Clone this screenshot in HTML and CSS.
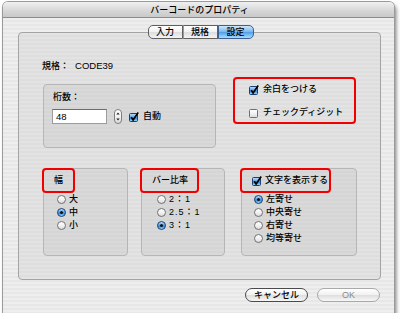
FILE: index.html
```html
<!DOCTYPE html>
<html lang="ja">
<head>
<meta charset="utf-8">
<title>バーコードのプロパティ</title>
<link rel="stylesheet" href="styles.css">
</head>
<body>

<svg class="defs" width="0" height="0">
  <defs>
    <linearGradient id="aqua" x1="0" y1="0" x2="0" y2="1">
      <stop offset="0" stop-color="#c8e4fb"/>
      <stop offset="0.45" stop-color="#5aa6ec"/>
      <stop offset="0.55" stop-color="#2f84dc"/>
      <stop offset="1" stop-color="#9fdcff"/>
    </linearGradient>
    <linearGradient id="plain" x1="0" y1="0" x2="0" y2="1">
      <stop offset="0" stop-color="#ffffff"/>
      <stop offset="0.5" stop-color="#f2f2f2"/>
      <stop offset="1" stop-color="#d9d9d9"/>
    </linearGradient>
  </defs>
</svg>

<div class="window">
  <div class="titlebar">バーコードのプロパティ</div>
  <div class="content">
    <div class="tabs">
      <span class="tab">入力</span><span class="tab">規格</span><span class="tab tab-on">設定</span>
    </div>

    <div class="pane">
      <div class="spec">規格：<span class="spec-val">CODE39</span></div>

      <div class="row-top">
        <div class="group digits">
          <div class="digits-label">桁数：</div>
          <div class="digits-row">
            <span class="field">48</span>
            <svg class="stepper" width="8" height="15" viewBox="0 0 8 15">
              <rect x="0.5" y="0.5" width="7" height="14" rx="3.5" fill="url(#plain)" stroke="#7d7d7d"/>
              <path d="M2.3 5.6 L4 3.6 L5.7 5.6 Z M2.3 9.4 L4 11.4 L5.7 9.4 Z" fill="#222"/>
            </svg>
            <svg class="check" width="10" height="10" viewBox="0 0 10 10">
              <rect x="0.5" y="1.5" width="8" height="8" rx="1" fill="url(#aqua)" stroke="#1d3f73"/>
              <path d="M2.2 5.2 L4.1 7.9 L9.2 0.6" fill="none" stroke="#000" stroke-width="1.7"/>
            </svg>
            <span class="opt-text">自動</span>
          </div>
        </div>

        <div class="mark margin-box">
          <div class="opt">
            <svg class="check" width="10" height="10" viewBox="0 0 10 10">
              <rect x="0.5" y="1.5" width="8" height="8" rx="1" fill="url(#aqua)" stroke="#1d3f73"/>
              <path d="M2.2 5.2 L4.1 7.9 L9.2 0.6" fill="none" stroke="#000" stroke-width="1.7"/>
            </svg>
            <span class="opt-text">余白をつける</span>
          </div>
          <div class="opt opt-second">
            <svg class="check" width="10" height="10" viewBox="0 0 10 10">
              <rect x="0.5" y="1.5" width="8" height="8" rx="1" fill="url(#plain)" stroke="#6f6f6f"/>
            </svg>
            <span class="opt-text">チェックディジット</span>
          </div>
        </div>
      </div>

      <div class="row-bottom">
        <div class="group box-width">
          <div class="mark title title-width">幅</div>
          <div class="radios">
            <div class="radio-row"><svg class="radio" width="9" height="9" viewBox="0 0 9 9"><circle cx="4.5" cy="4.5" r="4" fill="url(#plain)" stroke="#6f6f6f"/></svg><span class="opt-text">大</span></div>
            <div class="radio-row"><svg class="radio" width="9" height="9" viewBox="0 0 9 9"><circle cx="4.5" cy="4.5" r="4" fill="url(#aqua)" stroke="#1d3f73"/><circle cx="4.5" cy="4.5" r="1.5" fill="#111"/></svg><span class="opt-text">中</span></div>
            <div class="radio-row"><svg class="radio" width="9" height="9" viewBox="0 0 9 9"><circle cx="4.5" cy="4.5" r="4" fill="url(#plain)" stroke="#6f6f6f"/></svg><span class="opt-text">小</span></div>
          </div>
        </div>

        <div class="group box-ratio">
          <div class="mark title title-ratio">バー比率</div>
          <div class="radios radios-ratio">
            <div class="radio-row"><svg class="radio" width="9" height="9" viewBox="0 0 9 9"><circle cx="4.5" cy="4.5" r="4" fill="url(#plain)" stroke="#6f6f6f"/></svg><span class="opt-text num">2：1</span></div>
            <div class="radio-row"><svg class="radio" width="9" height="9" viewBox="0 0 9 9"><circle cx="4.5" cy="4.5" r="4" fill="url(#plain)" stroke="#6f6f6f"/></svg><span class="opt-text num">2.5：1</span></div>
            <div class="radio-row"><svg class="radio" width="9" height="9" viewBox="0 0 9 9"><circle cx="4.5" cy="4.5" r="4" fill="url(#aqua)" stroke="#1d3f73"/><circle cx="4.5" cy="4.5" r="1.5" fill="#111"/></svg><span class="opt-text num">3：1</span></div>
          </div>
        </div>

        <div class="group box-text">
          <div class="mark title title-text">
            <svg class="check" width="10" height="10" viewBox="0 0 10 10">
              <rect x="0.5" y="1.5" width="8" height="8" rx="1" fill="url(#aqua)" stroke="#1d3f73"/>
              <path d="M2.2 5.2 L4.1 7.9 L9.2 0.6" fill="none" stroke="#000" stroke-width="1.7"/>
            </svg>
            <span class="opt-text">文字を表示する</span>
          </div>
          <div class="radios radios-text">
            <div class="radio-row"><svg class="radio" width="9" height="9" viewBox="0 0 9 9"><circle cx="4.5" cy="4.5" r="4" fill="url(#aqua)" stroke="#1d3f73"/><circle cx="4.5" cy="4.5" r="1.5" fill="#111"/></svg><span class="opt-text">左寄せ</span></div>
            <div class="radio-row"><svg class="radio" width="9" height="9" viewBox="0 0 9 9"><circle cx="4.5" cy="4.5" r="4" fill="url(#plain)" stroke="#6f6f6f"/></svg><span class="opt-text">中央寄せ</span></div>
            <div class="radio-row"><svg class="radio" width="9" height="9" viewBox="0 0 9 9"><circle cx="4.5" cy="4.5" r="4" fill="url(#plain)" stroke="#6f6f6f"/></svg><span class="opt-text">右寄せ</span></div>
            <div class="radio-row"><svg class="radio" width="9" height="9" viewBox="0 0 9 9"><circle cx="4.5" cy="4.5" r="4" fill="url(#plain)" stroke="#6f6f6f"/></svg><span class="opt-text">均等寄せ</span></div>
          </div>
        </div>
      </div>
    </div>

    <div class="buttons">
      <span class="btn btn-cancel">キャンセル</span>
      <span class="btn btn-ok">OK</span>
    </div>
  </div>
</div>

</body>
</html>
```

FILE: styles.css
```css
body {
  margin: 0;
  padding: 0;
  background: #fff;
  font-family: "Liberation Sans", "Noto Sans CJK JP", sans-serif;
  font-size: 9px;
  font-weight: 500;
  color: #000;
  white-space: nowrap;
}

.defs {
  position: absolute;
  width: 0;
  height: 0;
}

.window {
  margin: 2px 0 0 3px;
  width: 391px;
  height: 311px;
  border-radius: 5px 5px 0 0;
  overflow: hidden;
  background: repeating-linear-gradient(#eeeeee 0 2px, #e7e7e7 2px 4px);
  box-shadow: 0 0 0 1px #9a9a9a, 2px 3px 4px rgba(0, 0, 0, 0.55);
}

.titlebar {
  height: 15px;
  line-height: 16px;
  text-align: center;
  background: linear-gradient(#f0f0f0, #d6d6d6 60%, #c9c9c9);
  border-bottom: 1px solid #8c8c8c;
  padding-left: 2px;
}

.content {
  padding: 7px 13px 0 15px;
}

.tabs {
  display: flex;
  justify-content: center;
  position: relative;
  z-index: 1;
  padding-left: 2px;
}

.tab {
  width: 33px;
  height: 12px;
  line-height: 12px;
  text-align: center;
  background: linear-gradient(#ffffff, #f1f1f1 50%, #dcdcdc 51%, #f4f4f4);
  border: 1px solid #5f5f5f;
  border-left: 1px solid #9a9a9a;
}

.tab:first-child {
  border-left: 1px solid #5f5f5f;
  border-radius: 5px 0 0 5px;
}

.tab-on {
  width: 34px;
  border-radius: 0 5px 5px 0;
  border-color: #3d5f91;
  background: linear-gradient(#cfe7fb, #76b6ef 50%, #4f9ce6 51%, #a6defd);
}

.pane {
  margin-top: -7px;
  height: 248px;
  box-sizing: border-box;
  border: 1px solid #a4a4a4;
  border-radius: 4px;
  background: repeating-linear-gradient(#e3e3e3 0 2px, #dedede 2px 4px);
  padding: 26px 0 0 24px;
}

.spec {
  line-height: 13px;
  margin-left: -1px;
}

.spec-val {
  margin-left: 6px;
  font-size: 9.5px;
}

.row-top {
  display: flex;
  align-items: flex-start;
  margin-top: 4px;
}

.group {
  border: 1px solid #b6b6b6;
  border-radius: 4px;
  background: repeating-linear-gradient(#d9d9d9 0 2px, #d5d5d5 2px 4px);
  box-sizing: border-box;
}

.digits {
  margin-top: 7px;
  width: 173px;
  height: 64px;
  padding: 6px 0 0 9px;
}

.digits-label {
  line-height: 13px;
}

.digits-row {
  display: flex;
  align-items: center;
  margin-top: 5px;
  margin-left: -1px;
}

.field {
  width: 55px;
  height: 15px;
  box-sizing: border-box;
  background: #fff;
  border: 1px solid #9c9c9c;
  border-top-color: #6c6c6c;
  padding-left: 3px;
  line-height: 13px;
  font-size: 9.5px;
  font-weight: normal;
}

.stepper {
  margin-left: 7px;
}

.digits-row .check {
  margin-left: 7px;
}

.opt-text {
  margin-left: 4px;
  line-height: 13px;
}

.mark {
  border: 2px solid #f10000;
  border-radius: 4px;
  box-sizing: border-box;
}

.margin-box {
  margin-left: 17px;
  width: 123px;
  height: 47px;
  padding: 4px 0 0 14px;
}

.opt {
  display: flex;
  align-items: center;
  height: 13px;
}

.opt-second {
  margin-top: 10px;
}

.row-bottom {
  display: flex;
  margin-top: 20px;
}

.row-bottom .group {
  height: 88px;
}

.box-width {
  width: 85px;
}

.box-ratio {
  width: 84px;
  margin-left: 13px;
}

.box-text {
  width: 116px;
  margin-left: 16px;
}

.title {
  margin: -1px 0 0 -2px;
  height: 25px;
  line-height: 21px;
  padding-left: 10px;
  display: flex;
  align-items: center;
}

.title-width {
  width: 33px;
}

.title-ratio {
  width: 59px;
}

.title-text {
  width: 91px;
}

.title-text .opt-text {
  margin-left: 3px;
}

.radios {
  padding-left: 13px;
}

.radios-ratio {
  padding-left: 15px;
}

.radios-text {
  padding-left: 12px;
}

.radio-row {
  display: flex;
  align-items: center;
  height: 13px;
}

.radio-row .opt-text {
  margin-left: 3px;
}

.num {
  letter-spacing: 1px;
}

.buttons {
  display: flex;
  justify-content: flex-end;
  gap: 9px;
  margin-top: 8px;
  padding-right: 1px;
}

.btn {
  width: 63px;
  height: 14px;
  line-height: 12px;
  box-sizing: border-box;
  text-align: center;
  border-radius: 7px;
  background: linear-gradient(#ffffff, #f0f0f0 50%, #dedede 51%, #f7f7f7);
}

.btn-cancel {
  border: 1px solid #4a4a4a;
}

.btn-ok {
  border: 1px solid #a9a9a9;
  color: #8a8a8a;
}
```
